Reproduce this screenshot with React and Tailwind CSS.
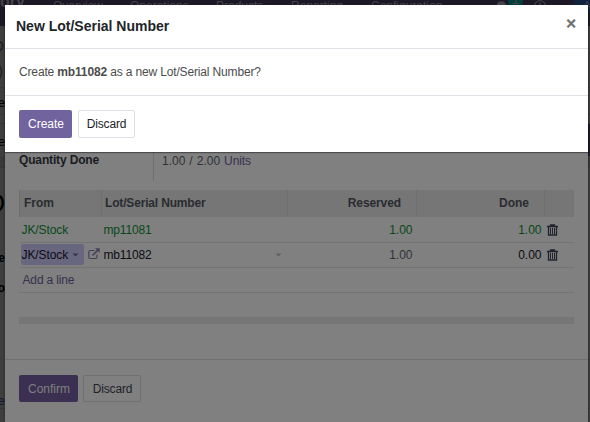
import { FaCaretDown, FaComments, FaRegClock } from 'react-icons/fa'

const menu = [
  { label: 'Overview', left: 'left-[53px]' },
  { label: 'Operations', left: 'left-[130px]' },
  { label: 'Products', left: 'left-[216px]' },
  { label: 'Reporting', left: 'left-[291px]' },
  { label: 'Configuration', left: 'left-[371px]' },
]

const lines = [
  { lot: 'mp11081', reserved: '1.00', done: '1.00', complete: true },
  { lot: 'mb11082', reserved: '1.00', done: '0.00', complete: false },
]

// pieces of the form that stick out to the left of the dialogs
const leftovers = [
  { text: 'O', pos: 'right-[1px] top-[36px] text-[14px] text-[#1c1c22]' },
  { text: ')', pos: 'right-[2px] top-[61px] text-[14px] text-[#1c1c22]' },
  { text: 'te', pos: 'right-0 top-[94px] text-[12px] text-black' },
  { text: 'e', pos: 'right-0 top-[133px] text-[12px] text-black' },
  { text: 'D', pos: 'right-0 top-[185px] text-[25px] text-black' },
  { text: 'e', pos: 'right-0 top-[249px] text-[12px] font-bold text-black' },
  { text: 'o', pos: 'right-0 top-[279px] text-[12px] font-bold text-black' },
  { text: 'er', pos: 'left-[-2px] top-[392px] text-[12px] text-[#10182a]' },
]

function TrashIcon() {
  return (
    <svg className="w-[11px] h-[12px]" viewBox="0 0 11 12" fill="none" stroke="#20232d">
      <path d="M0 2.5h11M3.5 2.5V1h4v1.5M1.5 2.5v8.500h8V2.5" strokeWidth="1.3" />
      <path d="M3.5 4v6M5.5 4v6M7.5 4v6" />
    </svg>
  )
}

function ExternalLinkIcon() {
  return (
    <svg className="w-[12px] h-[12px]" viewBox="0 0 12 12" fill="none" stroke="#45405a" strokeWidth="1.2">
      <path d="M6.5 2.5H2.2Q.8 2.5.8 4v5q0 1.5 1.4 1.5h5.300Q9 10.5 9 9V6.5" />
      <path d="M4.5 7.5L10 2" strokeWidth="1.7" />
      <path d="M7 .3H11.7V5z" fill="#45405a" stroke="none" />
    </svg>
  )
}

function Page() {
  return (
    <div className="flex h-full flex-col bg-[#3e3e3e]">
      <div className="relative h-[26px] shrink-0 bg-[#1c1825] text-[12px] leading-[14px] text-[#454349] overflow-hidden">
        <span className="absolute left-0 -top-[7px] text-[16px] leading-[18px] font-bold">ory</span>
        {menu.map(item => (
          <span key={item.label} className={`absolute -top-[1px] ${item.left}`}>{item.label}</span>
        ))}
        <FaComments className="absolute left-[497px] top-0 w-3 h-3" />
        <span className="absolute left-[508px] -top-[6px] w-[15px] h-[14px] rounded-full bg-[#003f3c] text-center text-[12px] leading-[12px]">1</span>
        <FaRegClock className="absolute left-[534px] top-0 w-3 h-3" />
        <span className="absolute left-[574px] -top-[1px] w-[16px] h-[14px] bg-[#10203f] pl-[9px]">A</span>
      </div>
      <div className="h-[62px] border-b border-[#353535]" />
      <div className="h-[27px] border-b border-[#353535]" />
      <div className="h-[9px] border-b border-[#353535]" />
      <div className="flex h-[32px] justify-end">
        <div className="w-[2px] bg-[#1c1825]" />
      </div>
      <div className="h-[12px] border-b border-[#353535] bg-[#393939]" />
      <div className="h-[241px] border-b border-[#353535]" />
    </div>
  )
}

function DetailedOperations() {
  return (
    <div className="absolute left-[5px] top-0 w-[583px] h-[422px] bg-[#808080] px-[14px] pt-[152px] shadow-[0_0_2px_rgba(0,0,0,.5)]">
      <div className="flex h-[38px]">
        <div className="w-[135px] h-[29px] border-r border-[#707070] text-[12px] leading-[16px] tracking-[-0.15px] font-bold text-[#191b1e]">Quantity Done</div>
        <div className="flex gap-[4px] pl-2 pt-px text-[12px] leading-[16px] text-[#303236]">
          <span>1.00</span><span>/</span><span>2.00</span>
          <span className="text-[#37304d] tracking-[-0.1px]">Units</span>
        </div>
      </div>
      <table className="w-[554px] table-fixed border-collapse text-[12px]">
        <colgroup>
          <col className="w-[82px]" />
          <col className="w-[186px]" />
          <col className="w-[129px]" />
          <col className="w-[128px]" />
          <col className="w-[29px]" />
        </colgroup>
        <thead>
          <tr className="h-[27px] bg-[#767676] text-[#292c30] [&>th]:border-l [&>th]:border-[#6f6f6f]">
            <th className="pl-[4px] pb-px text-left">From</th>
            <th className="pl-[3px] pb-px text-left tracking-[-0.17px]">Lot/Serial Number</th>
            <th className="pr-[15px] pb-px text-right tracking-[-0.1px]">Reserved</th>
            <th className="pr-[15px] pb-px text-right">Done</th>
            <th></th>
          </tr>
        </thead>
        <tbody>
          {lines.map(line => (
            <tr key={line.lot} className={`h-[25px] border-b border-[#747474] ${line.complete ? 'text-[#074818] [&>td]:pt-px' : 'text-[#0c0c12]'}`}>
              <td className="p-0 tracking-[-0.1px]">
                {line.complete ? (
                  <span className="pl-[2px]">JK/Stock</span>
                ) : (
                  <div className="flex items-center">
                    <div className="ml-[1px] flex h-[21px] w-[63px] items-center gap-[4px] rounded-[2px] bg-[#69677f] pl-px">
                      JK/Stock
                      <FaCaretDown className="w-[7px] h-[9px] text-[#38334d]" />
                    </div>
                    <span className="ml-[4px] pb-[2px]"><ExternalLinkIcon /></span>
                  </div>
                )}
              </td>
              <td className="p-0 pl-[2px]">
                <div className="flex items-center justify-between pr-[6px] tracking-[-0.15px]">
                  {line.lot}
                  {!line.complete && <FaCaretDown className="w-[7px] h-[9px] text-[#606060]" />}
                </div>
              </td>
              <td className={`p-0 pr-[4px] text-right ${line.complete ? '' : 'text-[#303236]'}`}>{line.reserved}</td>
              <td className="p-0 pr-[3px] text-right">{line.done}</td>
              <td className="p-0 pl-[2px]"><TrashIcon /></td>
            </tr>
          ))}
          <tr className="h-[25px]">
            <td colSpan={5} className="p-0 pl-[3px] text-[#37304d] tracking-[-0.15px]">Add a line</td>
          </tr>
        </tbody>
      </table>
      <div className="h-[25px] border-t border-[#747474]" />
      <div className="h-[7px] bg-[#767676]" />
      <div className="-mx-[14px] mt-[35px] flex gap-[5px] border-t border-[#707070] px-[14px] pt-[15px] text-[12px]">
        <button className="h-[27px] w-[59px] rounded-[2px] bg-[#3b3051] pl-px text-[#808080]">Confirm</button>
        <button className="h-[27px] w-[58px] rounded-[2px] border border-[#707070] pl-px text-[#202225] tracking-[-0.15px]">Discard</button>
      </div>
    </div>
  )
}

function NewLotDialog() {
  return (
    <div className="absolute left-[5px] top-[5px] w-[583px] h-[147px] bg-white text-[12px] shadow-[0_1px_1px_rgba(0,0,0,.4)]">
      <div className="flex h-[44px] items-center justify-between border-b border-[#dee2e6] pl-[11px] pr-[11px]">
        <h4 className="text-[14px] font-bold text-[#212529]">New Lot/Serial Number</h4>
        <button className="pb-[7px] font-['DejaVu_Sans',sans-serif] text-[14px] leading-[16px] font-bold text-[#6f6f6f] [-webkit-text-stroke:0.4px_#6f6f6f]">×</button>
      </div>
      <div className="h-[47px] border-b border-[#dee2e6] px-[14px] pt-[14px] leading-[18px] tracking-[-0.15px] text-[#4c4c4c]">
        Create <b>mb11082</b> as a new Lot/Serial Number?
      </div>
      <div className="flex gap-[6px] px-[14px] pt-[14px]">
        <button className="h-[28px] w-[53px] rounded-[2px] bg-[#71639e] pl-px text-white">Create</button>
        <button className="h-[28px] w-[57px] rounded-[2px] border border-[#dee2e6] text-[#212529] tracking-[-0.15px]">Discard</button>
      </div>
    </div>
  )
}

export default function App() {
  return (
    <div className="relative w-[590px] h-[422px] overflow-hidden font-['Liberation_Sans',Arial,sans-serif]">
      <Page />
      <div className="absolute left-0 top-0 h-full w-[5px] overflow-hidden">
        {leftovers.map((item, idx) => (
          <span key={idx} className={`absolute ${item.pos}`}>{item.text}</span>
        ))}
      </div>
      {/* the wizard stops short of the navbar, whose lower edge is hidden by the dialog */}
      <div className="absolute inset-x-0 top-[5px] bottom-0 overflow-hidden">
        <div className="absolute inset-x-0 -top-[5px]">
          <DetailedOperations />
        </div>
      </div>
      <NewLotDialog />
    </div>
  )
}
